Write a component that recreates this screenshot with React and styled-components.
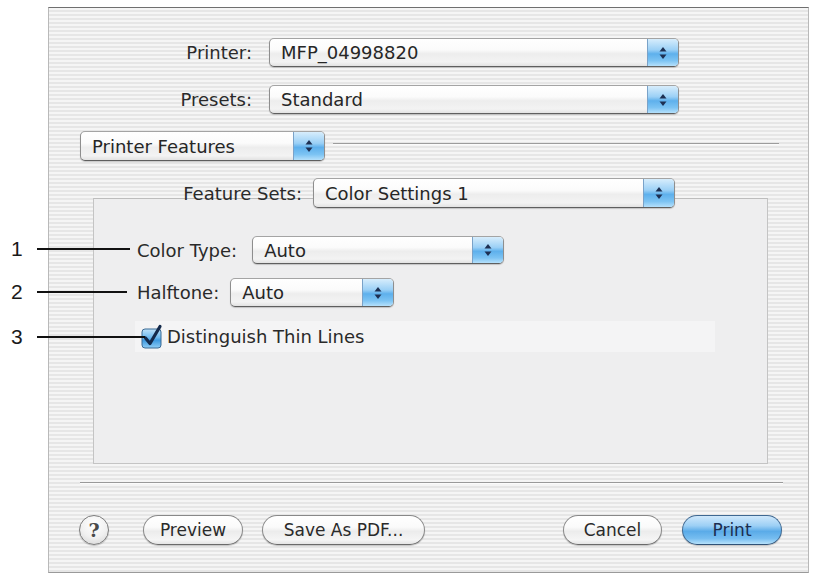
import React from "react";
import styled, { createGlobalStyle } from "styled-components";

const Global = createGlobalStyle`
  html, body { margin: 0; padding: 0; background: #ffffff; }
  body { font-family: "DejaVu Sans", "Liberation Sans", sans-serif; color: #2a2a2a; }
`;

const Page = styled.div`
  position: relative;
  width: 817px;
  height: 575px;
  box-sizing: border-box;
  padding: 7px 0 0 48px;
  background: #fff;
`;

const Window = styled.div`
  width: 761px;
  height: 566px;
  box-sizing: border-box;
  border: 1px solid #b9b9b9;
  border-top-color: #6f6f6f;
  border-bottom-color: #9a9a9a;
  background: repeating-linear-gradient(
    to bottom,
    #f5f5f5 0px,
    #f5f5f5 2px,
    #e6e6e6 2px,
    #e6e6e6 4px
  );
  padding-top: 30px;
  display: flex;
  flex-direction: column;
`;

const FormRow = styled.div`
  display: flex;
  align-items: center;
  gap: ${(p) => p.$gap}px;
  margin-top: ${(p) => p.$mt || 0}px;
  padding-left: ${(p) => p.$pl || 0}px;
  padding-right: ${(p) => p.$pr || 0}px;
  position: relative;
  z-index: ${(p) => (p.$raised ? 2 : "auto")};
`;

const Label = styled.span`
  width: ${(p) => (p.$w ? `${p.$w}px` : "auto")};
  text-align: right;
  font-size: 18px;
  color: #2a2a2a;
  white-space: nowrap;
`;

const Popup = styled.div`
  display: flex;
  flex: none;
  width: ${(p) => p.$w}px;
  height: ${(p) => p.$h || 29}px;
  box-sizing: border-box;
  border: 1px solid #8e8e8e;
  border-top-color: #a4a4a4;
  border-bottom-color: #5f5f5f;
  border-radius: 5px;
  background: linear-gradient(
    #ffffff 0%,
    #fbfbfb 40%,
    #ededed 55%,
    #f3f3f3 85%,
    #e2e2e2 100%
  );
  box-shadow: 0 1px 1px rgba(0, 0, 0, 0.18);
  overflow: hidden;
`;

const PopupText = styled.span`
  flex: 1;
  display: flex;
  align-items: center;
  padding-left: 11px;
  font-size: 18px;
  color: #262626;
  white-space: nowrap;
`;

const PopupArrows = styled.span`
  width: 30px;
  flex: none;
  display: flex;
  align-items: center;
  justify-content: center;
  border-left: 1px solid #7aa2c8;
  background: linear-gradient(
    #d7edfc 0%,
    #9bd0f6 40%,
    #5eb0ec 55%,
    #7cc3f3 80%,
    #b5e0fb 100%
  );
`;

const Separator = styled.div`
  flex: 1;
  align-self: flex-start;
  margin-top: ${(p) => p.$mt || 0}px;
  height: 0;
  border-top: 1px solid #9c9c9c;
  border-bottom: 1px solid #fbfbfb;
`;

const Panel = styled.div`
  margin: -10px 0 0 44px;
  width: 675px;
  height: 266px;
  box-sizing: border-box;
  border: 1px solid #c4c4c4;
  border-top-color: #bdbdbd;
  background: #eeeeef;
  padding-top: 37px;
  display: flex;
  flex-direction: column;
  position: relative;
  z-index: 1;
`;

const CheckRow = styled.div`
  display: flex;
  align-items: center;
  gap: 4px;
  margin: 14px 0 0 41px;
  width: 580px;
  height: 31px;
  padding-left: 6px;
  box-sizing: border-box;
  background: #f4f4f5;
  font-size: 18px;
  color: #2a2a2a;
`;

const HRule = styled.div`
  margin: 18px 0 0 31px;
  width: 703px;
  border-top: 1px solid #9a9a9a;
  border-bottom: 1px solid #fcfcfc;
`;

const ButtonBar = styled.div`
  display: flex;
  align-items: center;
  margin-top: 31px;
  padding: 0 26px 0 30px;
`;

const HelpButton = styled.div`
  width: 30px;
  height: 30px;
  box-sizing: border-box;
  border-radius: 50%;
  border: 1px solid #7c7c7c;
  background: radial-gradient(circle at 50% 30%, #ffffff 0%, #f0f0f0 55%, #d2d2d2 100%);
  box-shadow: 0 1px 1px rgba(0, 0, 0, 0.2);
  display: flex;
  align-items: center;
  justify-content: center;
  font-family: "DejaVu Serif", "Liberation Serif", serif;
  font-weight: bold;
  font-size: 19px;
  color: #4a4a4a;
  margin-right: 34px;
`;

const PillButton = styled.div`
  width: ${(p) => p.$w}px;
  height: 30px;
  box-sizing: border-box;
  border-radius: 15px;
  border: 1px solid ${(p) => (p.$primary ? "#3f6891" : "#888888")};
  border-bottom-color: ${(p) => (p.$primary ? "#2f5277" : "#6a6a6a")};
  background: ${(p) =>
    p.$primary
      ? "linear-gradient(#cfe8fb 0%, #9ccff5 35%, #5aabe8 55%, #76bdf0 80%, #b6e1fb 100%)"
      : "linear-gradient(#ffffff 0%, #fafafa 40%, #ececec 55%, #f5f5f5 85%, #e4e4e4 100%)"};
  box-shadow: 0 1px 1px rgba(0, 0, 0, 0.2);
  display: flex;
  align-items: center;
  justify-content: center;
  font-size: 17px;
  color: ${(p) => (p.$primary ? "#1b2d4f" : "#2a2a2a")};
  margin-left: ${(p) => p.$ml || 0}px;
  white-space: nowrap;
`;

const Spacer = styled.div`
  flex: 1;
`;

const Callout = styled.div`
  position: absolute;
  left: 11px;
  top: ${(p) => p.$y - 12}px;
  height: 24px;
  display: flex;
  align-items: center;
  z-index: 5;
  pointer-events: none;
`;

const CalloutNum = styled.span`
  width: 26px;
  font-family: "Liberation Sans", Arial, sans-serif;
  font-size: 21px;
  color: #1a1a1a;
`;

const CalloutLine = styled.span`
  width: ${(p) => p.$w}px;
  height: 2px;
  background: #111;
`;

const Arrows = () => (
  <svg width="8" height="14" viewBox="0 0 8 14">
    <path d="M4 1 L7.5 5.5 L0.5 5.5 Z" fill="#1d2f52" />
    <path d="M4 13 L7.5 8.5 L0.5 8.5 Z" fill="#1d2f52" />
  </svg>
);

const PopupButton = ({ w, h, children }) => (
  <Popup $w={w} $h={h}>
    <PopupText>{children}</PopupText>
    <PopupArrows>
      <Arrows />
    </PopupArrows>
  </Popup>
);

const CheckBox = () => (
  <svg width="22" height="24" viewBox="0 0 22 24" style={{ overflow: "visible" }}>
    <defs>
      <linearGradient id="cbg" x1="0" y1="0" x2="0" y2="1">
        <stop offset="0" stopColor="#bfe2fa" />
        <stop offset="0.45" stopColor="#6db9ef" />
        <stop offset="0.6" stopColor="#3f9ae0" />
        <stop offset="1" stopColor="#8fcdf5" />
      </linearGradient>
    </defs>
    <rect x="1" y="4" width="19" height="19" rx="3" fill="url(#cbg)" stroke="#3b6a94" strokeWidth="1" />
    <path
      d="M4.5 13 L9 18.5 L19 1.5"
      fill="none"
      stroke="#142a4c"
      strokeWidth="3.2"
      strokeLinecap="round"
      strokeLinejoin="round"
    />
  </svg>
);

export default function App() {
  return (
    <>
      <Global />
      <Page>
        <Window>
          <FormRow $gap={17}>
            <Label $w={203}>Printer:</Label>
            <PopupButton w={410}>MFP_04998820</PopupButton>
          </FormRow>
          <FormRow $gap={17} $mt={18}>
            <Label $w={203}>Presets:</Label>
            <PopupButton w={410}>Standard</PopupButton>
          </FormRow>
          <FormRow $gap={8} $mt={17} $pl={31} $pr={29}>
            <PopupButton w={245} h={30}>Printer Features</PopupButton>
            <Separator $mt={12} />
          </FormRow>
          <FormRow $gap={11} $mt={17} $raised>
            <Label $w={253}>Feature Sets:</Label>
            <PopupButton w={362} h={30}>Color Settings 1</PopupButton>
          </FormRow>
          <Panel>
            <FormRow $gap={15} $pl={43}>
              <Label>Color Type:</Label>
              <PopupButton w={252} h={28}>Auto</PopupButton>
            </FormRow>
            <FormRow $gap={11} $mt={14} $pl={43}>
              <Label>Halftone:</Label>
              <PopupButton w={164}>Auto</PopupButton>
            </FormRow>
            <CheckRow>
              <CheckBox />
              <span>Distinguish Thin Lines</span>
            </CheckRow>
          </Panel>
          <HRule />
          <ButtonBar>
            <HelpButton>?</HelpButton>
            <PillButton $w={100}>Preview</PillButton>
            <PillButton $w={163} $ml={19}>Save As PDF...</PillButton>
            <Spacer />
            <PillButton $w={99}>Cancel</PillButton>
            <PillButton $w={100} $ml={20} $primary>Print</PillButton>
          </ButtonBar>
        </Window>
        <Callout $y={249}>
          <CalloutNum>1</CalloutNum>
          <CalloutLine $w={93} />
        </Callout>
        <Callout $y={292}>
          <CalloutNum>2</CalloutNum>
          <CalloutLine $w={90} />
        </Callout>
        <Callout $y={337}>
          <CalloutNum>3</CalloutNum>
          <CalloutLine $w={108} />
        </Callout>
      </Page>
    </>
  );
}
